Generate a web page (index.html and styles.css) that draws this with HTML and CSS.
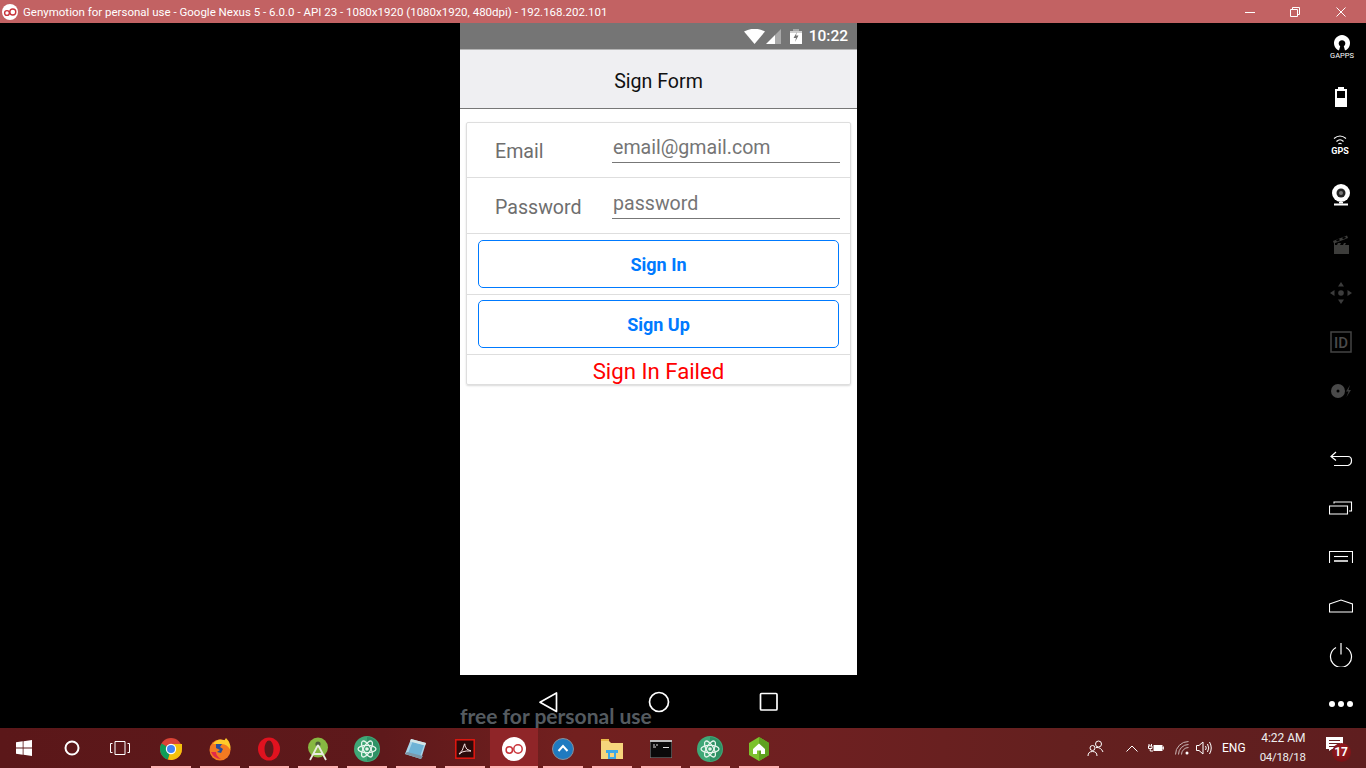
FILE: index.html
```html
<!DOCTYPE html>
<html lang="en">
<head>
  <meta charset="UTF-8">
  <meta name="viewport" content="width=device-width, initial-scale=1.0">
  <title>Genymotion - Sign Form</title>
  <link rel="stylesheet" href="styles.css">
</head>
<body>
  <svg class="defs" width="0" height="0">
    <symbol id="atom" viewBox="0 0 26 26">
      <circle cx="13" cy="13" r="13" fill="#3fa877"/>
      <path d="M13 1A12 12 0 0 1 25 13 12 12 0 0 1 13 25Z" fill="#2f9165"/>
      <g fill="none" stroke="#e6f5ec" stroke-width="1.3">
        <ellipse cx="13" cy="13" rx="9" ry="3.6" transform="rotate(60 13 13)"/>
        <ellipse cx="13" cy="13" rx="9" ry="3.6" transform="rotate(-60 13 13)"/>
        <ellipse cx="13" cy="13" rx="9" ry="3.6"/>
      </g>
      <circle cx="13" cy="13" r="1.8" fill="#e6f5ec"/>
    </symbol>
  </svg>

  <header class="titlebar">
    <div class="title-left">
      <svg width="16" height="16" viewBox="0 0 16 16">
        <circle cx="8" cy="8" r="8" fill="#fff"/>
        <circle cx="5" cy="9" r="2.4" fill="none" stroke="#c9343b" stroke-width="1.4"/>
        <circle cx="10.8" cy="8" r="3" fill="none" stroke="#c9343b" stroke-width="1.4"/>
      </svg>
      <span>Genymotion for personal use - Google Nexus 5 - 6.0.0 - API 23 - 1080x1920 (1080x1920, 480dpi) - 192.168.202.101</span>
    </div>
    <div class="win-buttons">
      <svg width="10" height="10" viewBox="0 0 10 10"><path d="M0 5.5H10" stroke="#fff" fill="none"/></svg>
      <svg width="10" height="10" viewBox="0 0 10 10"><path d="M.5 2.5h7v7h-7zM2.5 2.5v-2h7v7h-2" stroke="#fff" fill="none"/></svg>
      <svg class="win-close" width="10" height="10" viewBox="0 0 10 10"><path d="M.5.5l9 9M9.500.5l-9 9" stroke="#fff" fill="none"/></svg>
    </div>
  </header>

  <main class="stage">
    <section class="device">
      <div class="statusbar">
        <svg width="21" height="15" viewBox="0 0 21 15"><path d="M0 2.500Q10.500-3 21 2.500L10.500 15Z" fill="#fff"/></svg>
        <svg width="16" height="15" viewBox="0 0 16 15"><path d="M1 15 10 6V15Z" fill="#fff"/><path d="M10 6 16 0V15H10Z" fill="#a9a9a9"/></svg>
        <svg class="batt" width="12" height="15" viewBox="0 0 12 15"><path d="M3 0H9V2H3Z" fill="#a9a9a9"/><path d="M0 2H12V4H0Z" fill="#cfcfcf"/><path d="M0 4H12V15H0Z" fill="#fff"/><path d="M7 3 3.500 9H6L5 13 8.500 6.500H6Z" fill="#757575"/></svg>
        <span class="clock">10:22</span>
      </div>
      <div class="app-header">Sign Form</div>
      <div class="content">
        <div class="card">
          <div class="row row-field row-first">
            <span class="field-label">Email</span>
            <span class="field-input">email@gmail.com</span>
          </div>
          <div class="row row-field">
            <span class="field-label">Password</span>
            <span class="field-input">password</span>
          </div>
          <div class="row row-btn row-btn-first"><button class="btn">Sign In</button></div>
          <div class="row row-btn"><button class="btn">Sign Up</button></div>
          <div class="row-error">Sign In Failed</div>
        </div>
      </div>
      <nav class="softkeys">
        <svg width="24" height="24" viewBox="0 0 24 24"><path d="M19.500 3V21.500L3 12.200Z" fill="none" stroke="#fff" stroke-width="1.700" stroke-linejoin="round"/></svg>
        <svg width="24" height="24" viewBox="0 0 24 24"><circle cx="12" cy="12" r="9.500" fill="none" stroke="#fff" stroke-width="1.700"/></svg>
        <svg width="24" height="24" viewBox="0 0 24 24"><rect x="3.500" y="3.500" width="16.500" height="16.500" rx="1" fill="none" stroke="#fff" stroke-width="1.700"/></svg>
      </nav>
      <div class="watermark">free for personal use</div>
    </section>

    <aside class="sidebar">
      <div class="tool">
        <svg class="shift-right" width="26" height="26" viewBox="0 0 26 26">
          <path d="M10 15.500A8 8 0 1 1 16 15.500L14.800 11.200A3.300 3.300 0 1 0 11.200 11.200Z" fill="#fff"/>
          <text x="13" y="22.500" class="t-gapps">GAPPS</text>
        </svg>
      </div>
      <div class="tool">
        <svg width="14" height="22" viewBox="0 0 14 22"><path d="M1 3H4V1H10V3H13V21H1Z" fill="#fff"/><rect x="3" y="5" width="8" height="7" fill="#000"/></svg>
      </div>
      <div class="tool">
        <svg class="shift-left" width="26" height="22" viewBox="0 0 26 22">
          <path d="M7 3.500Q13-1.500 19 3.500M9.500 6.500Q13 3 16.500 6.500M11.500 9Q13 7.500 14.500 9" fill="none" stroke="#fff" stroke-width="1.100"/>
          <text x="13" y="18.500" class="t-gps">GPS</text>
        </svg>
      </div>
      <div class="tool">
        <svg width="20" height="22" viewBox="0 0 20 22"><circle cx="10" cy="9" r="9" fill="#fff"/><circle cx="10" cy="9" r="4.500" fill="#222"/><circle cx="10" cy="9" r="2" fill="#777"/><path d="M8 18h4v1.500H8Z" fill="#fff"/><rect x="3" y="19.500" width="14" height="2" fill="#fff"/></svg>
      </div>
      <div class="tool">
        <svg width="18" height="22" viewBox="0 0 18 22"><path d="M2 10H17V21H2Z" fill="#3d3d3b"/><path d="M1 8 15 2.500 16 5 2 10.500Z" fill="#3d3d3b"/><path d="M4 7l3-1.200 1 1.500-3 1.200zM10 4.800l3-1.200 1 1.500-3 1.200zM3 10h3l-1 2H3zM9 10h3l-1 2H8zM14 10h3v2h-4z" fill="#000"/></svg>
      </div>
      <div class="tool">
        <svg width="22" height="22" viewBox="0 0 22 22" fill="#3c3c3c"><path d="M11 0 14 4.500H8ZM11 22 8 17.500H14ZM0 11 4.500 8V14ZM22 11 17.500 14V8Z"/><circle cx="11" cy="11" r="2.800"/></svg>
      </div>
      <div class="tool">
        <svg width="22" height="22" viewBox="0 0 22 22"><rect x="1" y="1" width="20" height="20" fill="none" stroke="#444" stroke-width="1.500"/><text x="11" y="16.500" class="t-id">ID</text></svg>
      </div>
      <div class="tool">
        <svg width="22" height="16" viewBox="0 0 22 16"><circle cx="8" cy="8" r="7" fill="#4a4a4a"/><circle cx="8" cy="8" r="1.500" fill="#000"/><path d="M20 2 16 8.500H18.500L16.500 14 21 7H18.500Z" fill="#3a3a3a"/></svg>
      </div>
      <div class="tool tool-gap">
        <svg width="24" height="16" viewBox="0 0 24 16"><path d="M7 1 2 5.500 7 9.500M2 5.500H19Q22.500 5.500 22.500 9.500T19 14.500H5" fill="none" stroke="#fff" stroke-width="1.200"/></svg>
      </div>
      <div class="tool">
        <svg width="24" height="14" viewBox="0 0 24 14"><path d="M.5 5H18.500V13H.5ZM5 2.500V1H22.500V10H20" fill="none" stroke="#fff" stroke-width="1.100"/></svg>
      </div>
      <div class="tool">
        <svg width="24" height="12" viewBox="0 0 24 12"><path d="M.5 12V.5H23.500V12" fill="none" stroke="#fff" stroke-width="1.100"/><path d="M5 5.500H19" stroke="#fff" stroke-width="1.100"/><path d="M5 10H19" stroke="#c4c4c4" stroke-width="2"/></svg>
      </div>
      <div class="tool">
        <svg width="24" height="14" viewBox="0 0 24 14"><path d="M.5 5 12 1 23.500 5V13H.5Z" fill="none" stroke="#fff" stroke-width="1.100"/></svg>
      </div>
      <div class="tool">
        <svg width="24" height="24" viewBox="0 0 24 24"><path d="M7 4.500A10.500 10.500 0 1 0 17 4.500M12 0V11.500" fill="none" stroke="#fff" stroke-width="1.200"/></svg>
      </div>
      <div class="tool">
        <div class="dots"><i></i><i></i><i></i></div>
      </div>
    </aside>
  </main>

  <footer class="taskbar">
    <div class="start-area">
      <svg class="sys-icon" width="16" height="16" viewBox="0 0 16 16"><path d="M0 2.300 6.700 1.300V7.600H0ZM7.500 1.200 16 0V7.600H7.500ZM0 8.400H6.700V14.700L0 13.700ZM7.500 8.400H16V16L7.500 14.800Z" fill="#fff"/></svg>
      <svg class="sys-icon" width="16" height="16" viewBox="0 0 16 16"><circle cx="8" cy="8" r="6.500" fill="none" stroke="#fff" stroke-width="2"/></svg>
      <svg class="sys-icon sys-view" width="20" height="14" viewBox="0 0 20 14"><path d="M5 .5H15V13.500H5ZM2.500 2.500H.5V11.500H2.500M17.500 2.500H19.500V11.500H17.500" fill="none" stroke="#fff"/></svg>
    </div>
    <div class="apps">
      <div class="app">
        <svg width="24" height="24" viewBox="0 0 24 24">
          <circle cx="12" cy="12" r="11" fill="#db4437"/>
          <path d="M12 12 2.500 6.500A11 11 0 0 0 9 22.600Z" fill="#0f9d58"/>
          <path d="M12 12 9 22.600A11 11 0 0 0 23 12V7H12Z" fill="#f4c20d"/>
          <circle cx="12" cy="12" r="5.200" fill="#fff"/>
          <circle cx="12" cy="12" r="4" fill="#4285f4"/>
        </svg>
      </div>
      <div class="app">
        <svg width="24" height="24" viewBox="0 0 24 24">
          <circle cx="12" cy="13" r="10.500" fill="#f47a21"/>
          <path d="M5 7Q9 1 16 3 22 5 22.500 13 19 7 14 7 9 7 5 7Z" fill="#ffcb2b"/>
          <path d="M18 1Q23 6 22.500 12 21 6 16 4Z" fill="#ffcb2b"/>
          <path d="M8 7H14L12 10 15 12 13 16 9 15 12 13 8 11Z" fill="#2a4d9c"/>
          <path d="M3 15Q6 22 13 22 8 19 8 15Z" fill="#e0294a"/>
        </svg>
      </div>
      <div class="app">
        <svg width="24" height="24" viewBox="0 0 24 24">
          <ellipse cx="12" cy="12" rx="11" ry="11.500" fill="#e0121f"/>
          <ellipse cx="12" cy="12" rx="4.500" ry="8.500" fill="#5e1a1c"/>
        </svg>
      </div>
      <div class="app">
        <svg width="24" height="24" viewBox="0 0 24 24">
          <circle cx="12" cy="10.500" r="10" fill="#87b842"/>
          <circle cx="12" cy="7" r="2.600" fill="#4d5e3a"/>
          <path d="M12 8 4 23M12 8 20 23M7 17H17" fill="none" stroke="#e8ecdf" stroke-width="1.800"/>
        </svg>
      </div>
      <div class="app"><svg width="26" height="26"><use href="#atom"/></svg></div>
      <div class="app">
        <svg width="24" height="24" viewBox="0 0 24 24">
          <path d="M7 2 22 6 17 22 1 17Z" fill="#a9d4e8"/>
          <path d="M8.500 5 20 8 16 19.500 4 16Z" fill="#6fb3d6"/>
          <path d="M7 2 22 6 21 8.500 6 4.500Z" fill="#d4e6e8"/>
          <path d="M1 17 17 22 19 19 3 15Z" fill="#7d97a8"/>
        </svg>
      </div>
      <div class="app">
        <svg width="20" height="20" viewBox="0 0 20 20">
          <rect x=".8" y=".8" width="18.400" height="18.400" fill="#2a0a0a" stroke="#e3170f" stroke-width="1.500"/>
          <path d="M4 15Q8 12 9.500 5 10 3.500 10 7 11 11 16 12 11 11.500 7 13 5 15.500 4 15Z" fill="none" stroke="#f3dede" stroke-width="1"/>
        </svg>
      </div>
      <div class="app app-active">
        <svg width="24" height="24" viewBox="0 0 24 24">
          <circle cx="12" cy="12" r="12" fill="#fff"/>
          <circle cx="7.300" cy="13" r="3.200" fill="none" stroke="#c9343b" stroke-width="1.500"/>
          <circle cx="16" cy="12" r="4.200" fill="none" stroke="#c9343b" stroke-width="1.500"/>
        </svg>
      </div>
      <div class="app">
        <svg width="22" height="22" viewBox="0 0 22 22">
          <circle cx="11" cy="11" r="10.500" fill="#1f7ac0" stroke="#8a8f98"/>
          <path d="M6.500 13 11 8 15.500 13" fill="none" stroke="#fff" stroke-width="2"/>
        </svg>
      </div>
      <div class="app">
        <svg width="22" height="20" viewBox="0 0 22 20">
          <path d="M0 2H8L10 4H22V20H0Z" fill="#f6d57c"/>
          <path d="M0 0H8V2H0Z" fill="#e9b949"/>
          <path d="M7 14H15V20H7Z" fill="#3ea8e5"/>
          <path d="M5 11H17V14H5Z" fill="#3ea8e5"/>
          <path d="M9 14H13V18H9Z" fill="#f6d57c"/>
        </svg>
      </div>
      <div class="app">
        <svg width="22" height="18" viewBox="0 0 22 18">
          <rect width="22" height="18" fill="#0a0a0a" stroke="#8d8d8d"/>
          <path d="M0 0H22V2H0Z" fill="#bcbcbc"/>
          <path d="M3 5H5M6 5H8M3 7H6M13 7.500H19" stroke="#ddd"/>
        </svg>
      </div>
      <div class="app"><svg width="26" height="26"><use href="#atom"/></svg></div>
      <div class="app">
        <svg width="22" height="24" viewBox="0 0 22 24">
          <path d="M11 0 21 6V18L11 24 1 18V6Z" fill="#7cc22d"/>
          <path d="M11 0 21 6V18L11 24Z" fill="#5fa120"/>
          <path d="M11 6.500 17 12V17H13V13.500H9V17H5V12Z" fill="#fff"/>
        </svg>
      </div>
    </div>
    <div class="tray">
      <svg class="tray-people" width="18" height="18" viewBox="0 0 18 18"><circle cx="11.500" cy="5" r="3" fill="none" stroke="#fff"/><circle cx="5.500" cy="9" r="2.500" fill="none" stroke="#fff"/><path d="M1 17Q1 12.500 5.500 12.500T10 17M9 8.500Q14 8 16 13" fill="none" stroke="#fff"/></svg>
      <svg class="tray-caret" width="12" height="7" viewBox="0 0 12 7"><path d="M.5 6.500 6 1 11.500 6.500" fill="none" stroke="#fff"/></svg>
      <svg class="tray-batt" width="16" height="10" viewBox="0 0 16 10"><path d="M5.500 2H14.500V8H5.500Z" fill="#fff"/><path d="M15 4H16V6H15ZM1 1V3M3.500 1V3M.5 3H4V5.500H.5ZM2.200 5.500V8H5" fill="none" stroke="#fff"/></svg>
      <svg class="tray-wifi" width="14" height="14" viewBox="0 0 14 14"><path d="M.5 13.500A13 13 0 0 1 13.500 .5M3.500 13.500A10 10 0 0 1 13.500 3.500M6.500 13.500A7 7 0 0 1 13.500 6.500" fill="none" stroke="#cbb7b7"/><circle cx="12" cy="12" r="1.500" fill="#fff"/></svg>
      <svg class="tray-vol" width="17" height="14" viewBox="0 0 17 14"><path d="M.5 4.500H3L7 1V13L3 9.500H.5ZM9.500 5Q11 7 9.500 9M11.500 3Q14 7 11.500 11M13.500 1Q17 7 13.500 13" fill="none" stroke="#fff"/></svg>
      <span class="tray-lang">ENG</span>
      <div class="tray-clock"><span>4:22 AM</span><span class="tray-date">04/18/18</span></div>
      <div class="tray-note">
        <svg width="17" height="14" viewBox="0 0 17 14"><path d="M0 0H17V12H6L3 14V12H0Z" fill="#fff"/><path d="M3 3.500H14M3 6.500H14M3 9.500H10" stroke="#6a2223"/></svg>
        <span class="badge">17</span>
      </div>
    </div>
  </footer>
</body>
</html>
```

FILE: styles.css
```css
* {
  box-sizing: border-box;
}
html, body {
  margin: 0;
  height: 100%;
}
body {
  width: 1366px;
  height: 768px;
  overflow: hidden;
  display: flex;
  flex-direction: column;
  background: #000;
  font-family: Roboto, sans-serif;
}
svg {
  display: block;
  flex: none;
}
.defs {
  position: absolute;
}

/* window title */
.titlebar {
  height: 23px;
  flex: none;
  background: #c26263;
  color: #fff;
  display: flex;
  justify-content: space-between;
  align-items: center;
}
.title-left {
  display: flex;
  align-items: center;
  gap: 5px;
  padding-left: 2px;
  font-size: 11.500px;
  white-space: nowrap;
}
.win-buttons {
  display: flex;
  align-items: center;
  gap: 35px;
  padding-right: 20px;
}
.win-close {
  margin-left: 1px;
}

/* emulator area */
.stage {
  flex: 1;
  display: flex;
  padding-left: 460px;
  position: relative;
}
.device {
  width: 397px;
  display: flex;
  flex-direction: column;
}
.statusbar {
  height: 27px;
  flex: none;
  background: #757575;
  border-bottom: 1px solid #b4b4b4;
  display: flex;
  align-items: center;
  justify-content: flex-end;
  padding-right: 9px;
  color: #fff;
}
.batt {
  margin-left: 9px;
}
.clock {
  font-size: 15.500px;
  font-weight: 500;
  margin-left: 7px;
}
.app-header {
  height: 59px;
  flex: none;
  padding-top: 4px;
  background: #efeff2;
  border-bottom: 1px solid #777;
  display: flex;
  align-items: center;
  justify-content: center;
  font-size: 19.600px;
  color: #111;
}
.content {
  height: 566px;
  flex: none;
  background: #fff;
  padding: 13px 6px 0;
}
.card {
  border: 1px solid #dedede;
  border-radius: 2px;
  box-shadow: 0 1px 2px rgba(0, 0, 0, 0.15);
}
.row {
  border-bottom: 1px solid #dedede;
}
.row-field {
  height: 56px;
  display: flex;
  padding-left: 28px;
}
.row-first {
  height: 55px;
}
.field-label {
  width: 117px;
  font-size: 19.600px;
  line-height: 60px;
  color: #6e6e6e;
}
.row-first .field-label {
  line-height: 57px;
}
.field-input {
  width: 228px;
  height: 41px;
  padding-left: 1px;
  font-size: 19.600px;
  line-height: 52px;
  color: #757575;
  border-bottom: 1px solid #777;
}
.row-first .field-input {
  height: 40px;
  line-height: 50px;
}
.row-btn {
  height: 60px;
  padding: 5px 11px 0;
}
.row-btn-first {
  height: 61px;
  padding-top: 6px;
}
.btn {
  display: block;
  width: 361px;
  height: 48px;
  padding: 0;
  background: #fff;
  border: 1px solid #007aff;
  border-radius: 5px;
  color: #007aff;
  font-family: Roboto, sans-serif;
  font-size: 18px;
  font-weight: 700;
}
.row-error {
  height: 29px;
  text-align: center;
  font-size: 22.200px;
  line-height: 32px;
  color: #f00;
}
.softkeys {
  flex: 1;
  display: flex;
  align-items: center;
  justify-content: center;
  gap: 86px;
}
.watermark {
  position: absolute;
  left: 460px;
  top: 680px;
  font-family: Lato, sans-serif;
  font-size: 21px;
  font-weight: 700;
  line-height: 26px;
  color: #555b60;
  white-space: nowrap;
}

/* right toolbar */
.sidebar {
  width: 50px;
  margin-left: auto;
  display: flex;
  flex-direction: column;
}
.tool {
  height: 49px;
  flex: none;
  display: flex;
  align-items: center;
  justify-content: center;
}
.tool-gap {
  margin-top: 19px;
}
.shift-right {
  margin-left: 2px;
}
.shift-left {
  margin-right: 2px;
}
.t-gapps {
  font-size: 7.500px;
  fill: #fff;
  text-anchor: middle;
}
.t-gps {
  font-size: 9px;
  font-weight: 700;
  fill: #fff;
  text-anchor: middle;
}
.t-id {
  font-size: 15px;
  font-weight: 500;
  fill: #4a4a4a;
  text-anchor: middle;
}
.dots {
  display: flex;
  gap: 3px;
}
.dots i {
  width: 6px;
  height: 6px;
  border-radius: 50%;
  background: #fff;
}

/* windows taskbar */
.taskbar {
  height: 40px;
  flex: none;
  display: flex;
  align-items: center;
  background: linear-gradient(90deg, #5b1719 0, #5e191b 28%, #72201f 42%, #6e2021 60%, #64201f 78%, #5f1e1f 100%);
  color: #fff;
}
.start-area {
  width: 147px;
  flex: none;
  display: flex;
  align-items: center;
  height: 100%;
}
.start-area .sys-icon {
  margin-left: 32px;
}
.start-area .sys-icon:first-child {
  margin-left: 16px;
}
.start-area .sys-view {
  margin-left: 30px;
}
.apps {
  display: flex;
  height: 100%;
  gap: 1px;
}
.app {
  width: 48px;
  height: 100%;
  display: flex;
  align-items: center;
  justify-content: center;
  padding-top: 1px;
  position: relative;
}
.app::after {
  content: "";
  position: absolute;
  left: 4px;
  right: 4px;
  bottom: 0;
  height: 2px;
  background: #ffb3b3;
}
.app-active {
  background: #8f2528;
}
.app-active::after {
  left: 0;
  right: 0;
}
.tray {
  flex: 1;
  display: flex;
  align-items: center;
  height: 100%;
  font-size: 12px;
}
.tray-people {
  margin-left: 304px;
}
.tray-caret {
  margin-left: 21px;
}
.tray-batt {
  margin-left: 10px;
}
.tray-wifi {
  margin-left: 11px;
}
.tray-vol {
  margin-left: 7px;
}
.tray-lang {
  margin-left: 9px;
}
.tray-clock {
  display: flex;
  flex-direction: column;
  align-items: flex-end;
  width: 60px;
  line-height: 19px;
  color: #eee;
}
.tray-date {
  font-size: 11.500px;
  letter-spacing: -0.3px;
}
.tray-note {
  margin-left: 20px;
  position: relative;
  margin-top: -8px;
}
.badge {
  position: absolute;
  left: 6px;
  top: 6px;
  width: 19px;
  height: 19px;
  border-radius: 50%;
  background: radial-gradient(circle at 50% 35%, #a01c22, #6d0f13);
  font-size: 12px;
  font-weight: 700;
  line-height: 19px;
  text-align: center;
}
```
